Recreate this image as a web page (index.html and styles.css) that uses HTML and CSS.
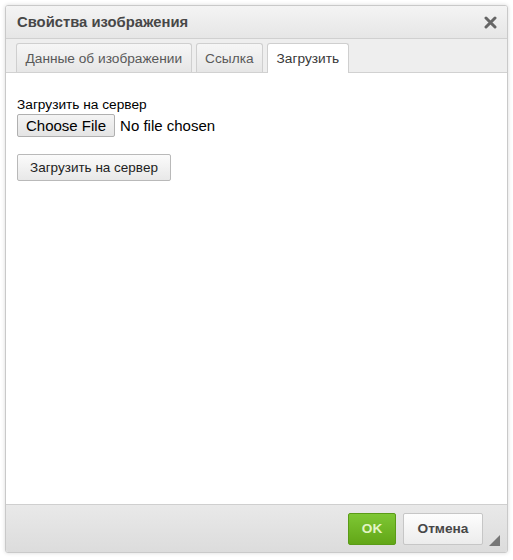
FILE: index.html
```html
<!DOCTYPE html>
<html lang="ru">
<head>
    <meta charset="UTF-8">
    <title>Свойства изображения</title>
    <link rel="stylesheet" href="styles.css">
</head>
<body>
    <div class="dialog">
        <div class="dialog-title">
            <span>Свойства изображения</span>
            <svg class="close" width="13" height="13" viewBox="0 0 13 13">
                <path d="M2 2 L11 11 M11 2 L2 11" stroke="#666" stroke-width="3" stroke-linecap="round"/>
            </svg>
        </div>
        <div class="tabs">
            <div class="tab">Данные об изображении</div>
            <div class="tab">Ссылка</div>
            <div class="tab active">Загрузить</div>
        </div>
        <div class="dialog-body">
            <div class="label">Загрузить на сервер</div>
            <div class="file-row">
                <span class="file-btn">Choose File</span>
                <span class="file-name">No file chosen</span>
            </div>
            <button class="upload-btn">Загрузить на сервер</button>
        </div>
        <div class="dialog-footer">
            <button class="btn btn-ok">OK</button>
            <button class="btn btn-cancel">Отмена</button>
            <span class="resizer"></span>
        </div>
    </div>
</body>
</html>
```

FILE: styles.css
```css
body {
    margin: 0;
    padding: 5px;
    background: #fff;
    font-family: "Liberation Sans", Arial, sans-serif;
}
.dialog {
    width: 501px;
    height: 546px;
    border: 1px solid #c9c9c9;
    border-radius: 3px;
    box-shadow: 0 0 4px rgba(0,0,0,0.15);
    display: flex;
    flex-direction: column;
    background: #fff;
    overflow: hidden;
}
.dialog-title {
    height: 32px;
    display: flex;
    align-items: center;
    justify-content: space-between;
    padding: 0 11px;
    background: linear-gradient(#f4f4f4, #e6e6e6);
    border-bottom: 1px solid #d0d0d0;
    font-size: 14.8px;
    font-weight: bold;
    color: #474747;
}
.close {
    margin-right: -1px;
}
.tabs {
    height: 33px;
    display: flex;
    align-items: flex-end;
    gap: 4px;
    padding: 0 0 0 10px;
    background: #eeeeee;
    border-bottom: 1px solid #d1d1d1;
}
.tab {
    height: 28px;
    padding: 0 8.5px;
    display: flex;
    align-items: center;
    font-size: 13.7px;
    color: #595959;
    background: linear-gradient(#f6f6f6, #e6e6e6);
    border: 1px solid #cfcfcf;
    border-bottom: none;
    border-radius: 3px 3px 0 0;
}
.tab.active {
    background: #fff;
    color: #383838;
    height: 29px;
    margin-bottom: -1px;
}
.dialog-body {
    flex: 1;
    padding: 24px 11px 0;
    font-size: 13.7px;
    color: #000;
}
.label {
    margin-bottom: 2px;
}
.file-row {
    display: flex;
    align-items: center;
    gap: 5px;
    font-size: 15px;
}
.file-btn {
    padding: 2px 8px;
    border: 1px solid #b0b0b0;
    border-radius: 2px;
    background: linear-gradient(#f4f4f4, #e4e4e4);
}
.upload-btn {
    margin-top: 17px;
    padding: 5px 12px;
    font-family: inherit;
    font-size: 13.5px;
    color: #222;
    background: linear-gradient(#fbfbfb, #e8e8e8);
    border: 1px solid #b9b9b9;
    border-radius: 2px;
}
.dialog-footer {
    height: 47px;
    display: flex;
    align-items: center;
    justify-content: flex-end;
    gap: 7px;
    padding: 0 24px 0 0;
    background: linear-gradient(#e9e9e9, #dcdcdc);
    border-top: 1px solid #cfcfcf;
    position: relative;
}
.btn {
    height: 32px;
    font-family: inherit;
    font-size: 13.7px;
    font-weight: bold;
    border-radius: 2px;
}
.btn-ok {
    width: 48px;
    color: #e2f5c5;
    background: linear-gradient(#7ec734, #62a617);
    border: 1px solid #5a9b17;
}
.btn-cancel {
    width: 80px;
    color: #474747;
    background: linear-gradient(#fdfdfd, #ececec);
    border: 1px solid #c6c6c6;
}
.resizer {
    position: absolute;
    right: 7px;
    bottom: 6px;
    width: 0;
    height: 0;
    border-left: 11px solid transparent;
    border-bottom: 11px solid #777;
}
```
